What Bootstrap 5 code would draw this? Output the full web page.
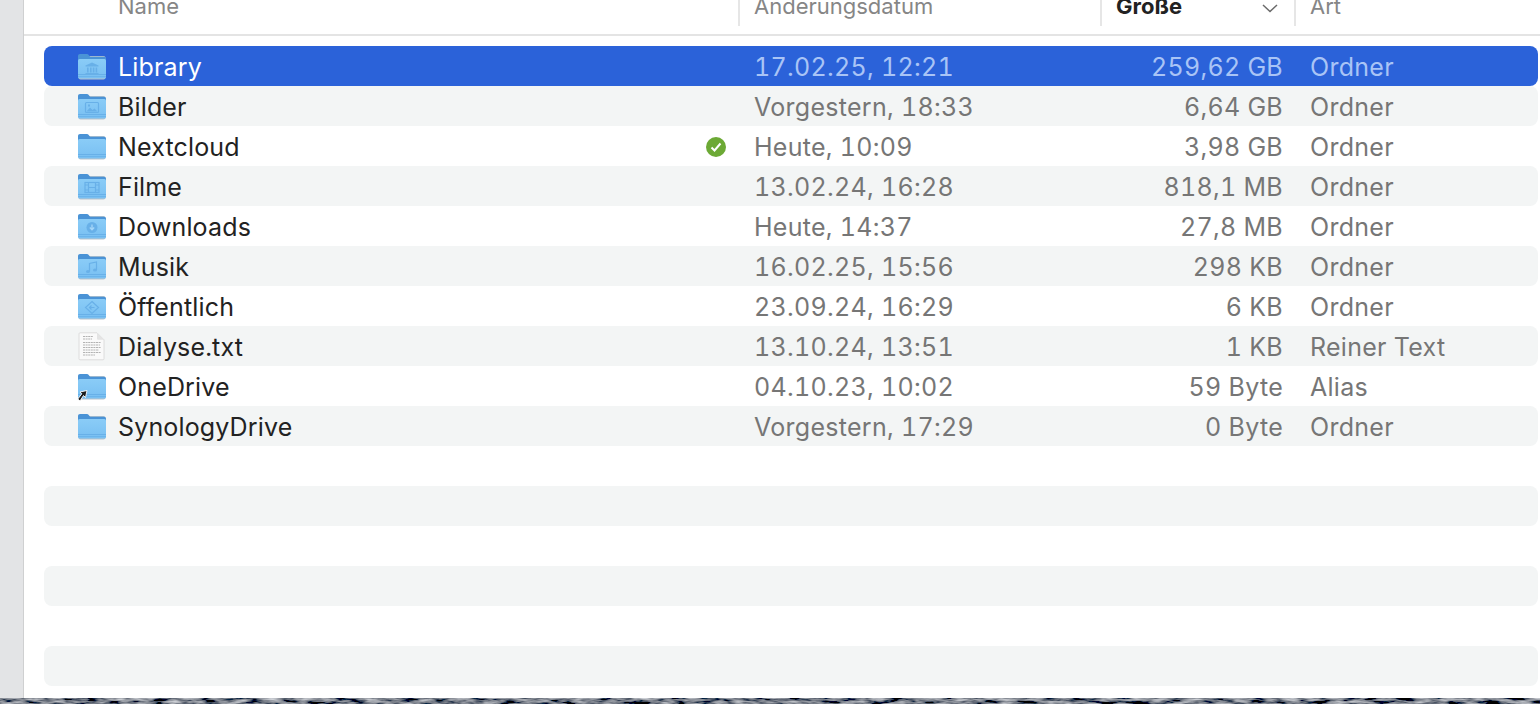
<!DOCTYPE html>
<html lang="de">
<head>
  <meta charset="UTF-8" />
  <title>Finder</title>
  <link href="https://cdn.jsdelivr.net/npm/bootstrap@5.3.3/dist/css/bootstrap.min.css" rel="stylesheet"/>
  <style>
    body { font-family: Inter, "Liberation Sans", sans-serif; background: #fff; color: #222; }
    .side-strip { width: 24px; background: #e3e4e6; border-right: 1px solid #cfd0d1; }
    .head-bar { height: 36px; border-bottom: 2px solid #e4e4e4; font-size: 22px; line-height: 20px; color: #868686; }
    .head-cell { height: 26px; overflow: visible; }
    .head-cell span { display: block; margin-top: -4px; }
    .head-sep { border-left: 2px solid #e6e6e6; }
    .head-active { color: #222; font-weight: 700; }
    .file-list { padding: 10px 2px 0 20px; }
    .file-row { height: 40px; padding-top: 1px; border-radius: 8px; font-size: 25px; line-height: 40px; letter-spacing: .28px; color: #767676; flex: none; font-variant-numeric: tabular-nums; }
    .file-row.alt { background: #f3f5f5; }
    .file-row.sel { background: #2b62d9; color: #a9c4f6; }
    .file-row.sel .col-name { color: #fff; }
    .col-name { width: 695px; padding-left: 33px; color: #222; letter-spacing: .15px; }
    .col-date { width: 362px; padding-left: 15px; }
    .col-size { width: 194px; padding-right: 12px; text-align: right; }
    .col-kind { padding-left: 15px; }
    .col-name svg.item-icon { width: 30px; height: 28px; margin: 5px 11px 0 0; flex: none; overflow: visible; }
    .head-name { width: 714px; padding-left: 94px; }
    .head-date { width: 362px; padding-left: 14px; }
    .head-size { width: 194px; padding: 0 16px 0 14px; }
    .head-kind { padding-left: 14px; flex: 1; }
    .state-icon { width: 22px; height: 22px; margin: 9px 12px 0 auto; }
    .photo-strip { height: 6px; flex: none; background: #23272f; }
    .photo-strip svg { display: block; width: 100%; height: 6px; }
    .glyph { fill: #68b0e8; }
    .glyph-line { fill: none; stroke: #68b0e8; stroke-width: 1.2; }
  </style>
</head>
<body>
  <svg width="0" height="0" class="position-absolute">
    <defs>
      <linearGradient id="front" x1="0" y1="0" x2="0" y2="1">
        <stop offset="0" stop-color="#8accf7"/>
        <stop offset="1" stop-color="#78bff2"/>
      </linearGradient>
      <filter id="grain" x="0" y="0" width="100%" height="100%">
        <feTurbulence type="fractalNoise" baseFrequency="0.06 0.3" numOctaves="3" seed="7"/>
        <feColorMatrix type="matrix" values="1.2 0 0 0 -0.42  1.2 0 0 0 -0.4  1.2 0 0 0 -0.36  0 0 0 0 1"/>
      </filter>
      <symbol id="folder" viewBox="0 0 30 28">
        <rect x="1.5" y="4" width="27" height="23.5" rx="2" fill="#b9c4cc"/>
        <path d="M1 4.200C1 2.800 1.800 2 3 2h6.500c1 0 1.600.3 2.200 1l1 1.200c.4.4.8.6 1.400.6H27c1.200 0 2 .8 2 2V12H1z" fill="#4a93d6"/>
        <rect x="1" y="7" width="28" height="19.500" rx="1.600" fill="url(#front)"/>
        <rect x="1" y="22" width="28" height="1" fill="#68b0e8"/>
        <rect x="1" y="24" width="28" height="1" fill="#6cb4ea"/>
      </symbol>
    </defs>
  </svg>

  <div class="d-flex vh-100 flex-column overflow-hidden">
    <div class="d-flex flex-grow-1 overflow-hidden">
      <div class="side-strip flex-shrink-0"></div>
      <div class="flex-grow-1 d-flex flex-column overflow-hidden">
        <div class="head-bar d-flex flex-shrink-0">
          <div class="head-cell head-name"><span>Name</span></div>
          <div class="head-cell head-sep head-date"><span>Änderungsdatum</span></div>
          <div class="head-cell head-sep head-size d-flex justify-content-between head-active">
            <span>Große</span>
            <svg width="16" height="9" viewBox="0 0 16 9" class="mt-1"><path d="M1 1l7 6.500L15 1" fill="none" stroke="#6b6b6b" stroke-width="1.500"/></svg>
          </div>
          <div class="head-cell head-sep head-kind"><span>Art</span></div>
        </div>

        <div class="file-list d-flex flex-column flex-grow-1 overflow-hidden">
          <div class="file-row sel d-flex">
            <div class="col-name d-flex">
              <svg class="item-icon"><use href="#folder"/><path class="glyph" d="M15 10.500l6.500 3v1h-13v-1zM10 15.500h1.600v5H10zM13 15.500h1.600v5H13zM15.800 15.500h1.600v5h-1.600zM18.600 15.500h1.600v5h-1.600zM8.500 21h13v1.200h-13z"/></svg>
              <span>Library</span>
            </div>
            <div class="col-date">17.02.25, 12:21</div>
            <div class="col-size">259,62 GB</div>
            <div class="col-kind">Ordner</div>
          </div>
          <div class="file-row alt d-flex">
            <div class="col-name d-flex">
              <svg class="item-icon"><use href="#folder"/><rect class="glyph-line" x="8.500" y="10.500" width="13" height="10" rx="1"/><path class="glyph" d="M9.500 19.500l3.500-4 2.500 2.500 2-1.500 3 3zM11 12.500h2v2h-2z"/></svg>
              <span>Bilder</span>
            </div>
            <div class="col-date">Vorgestern, 18:33</div>
            <div class="col-size">6,64 GB</div>
            <div class="col-kind">Ordner</div>
          </div>
          <div class="file-row d-flex">
            <div class="col-name d-flex">
              <svg class="item-icon"><use href="#folder"/></svg>
              <span>Nextcloud</span>
              <svg class="state-icon" viewBox="0 0 22 22"><circle cx="11" cy="11" r="10" fill="#6ca935"/><path d="M6.500 11.500l3 3 6-7" fill="none" stroke="#fff" stroke-width="2"/></svg>
            </div>
            <div class="col-date">Heute, 10:09</div>
            <div class="col-size">3,98 GB</div>
            <div class="col-kind">Ordner</div>
          </div>
          <div class="file-row alt d-flex">
            <div class="col-name d-flex">
              <svg class="item-icon"><use href="#folder"/><rect class="glyph-line" x="8" y="10.500" width="14" height="10"/><path class="glyph-line" d="M11.500 10.500v10M18.500 10.500v10M11.500 15.500h7M8 13h3.500M8 18h3.500M18.500 13H22M18.500 18H22"/></svg>
              <span>Filme</span>
            </div>
            <div class="col-date">13.02.24, 16:28</div>
            <div class="col-size">818,1 MB</div>
            <div class="col-kind">Ordner</div>
          </div>
          <div class="file-row d-flex">
            <div class="col-name d-flex">
              <svg class="item-icon"><use href="#folder"/><circle class="glyph" cx="15" cy="15.500" r="5.500"/><path d="M15 12.500v5M12.800 15.500l2.200 2.300 2.200-2.300" fill="none" stroke="#a5d6f8" stroke-width="1.300"/></svg>
              <span>Downloads</span>
            </div>
            <div class="col-date">Heute, 14:37</div>
            <div class="col-size">27,8 MB</div>
            <div class="col-kind">Ordner</div>
          </div>
          <div class="file-row alt d-flex">
            <div class="col-name d-flex">
              <svg class="item-icon"><use href="#folder"/><path class="glyph-line" d="M12.500 19.500v-8l7-1.500v8"/><ellipse class="glyph" cx="11" cy="19.500" rx="2" ry="1.500"/><ellipse class="glyph" cx="18" cy="18" rx="2" ry="1.500"/></svg>
              <span>Musik</span>
            </div>
            <div class="col-date">16.02.25, 15:56</div>
            <div class="col-size">298 KB</div>
            <div class="col-kind">Ordner</div>
          </div>
          <div class="file-row d-flex">
            <div class="col-name d-flex">
              <svg class="item-icon"><use href="#folder"/><path class="glyph-line" d="M15 9.500l6.500 6-6.500 6-6.500-6z"/><path class="glyph-line" d="M17.500 15.500h-5M14.500 13.500l-2 2 2 2"/></svg>
              <span>Öffentlich</span>
            </div>
            <div class="col-date">23.09.24, 16:29</div>
            <div class="col-size">6 KB</div>
            <div class="col-kind">Ordner</div>
          </div>
          <div class="file-row alt d-flex">
            <div class="col-name d-flex">
              <svg class="item-icon" viewBox="0 0 30 28">
                <path d="M3 .8h17l7 7v19a1 1 0 0 1-1 1H3a1 1 0 0 1-1-1V1.800a1 1 0 0 1 1-1z" fill="#fafafa" stroke="#d6d6d6" stroke-width=".8"/>
                <path d="M20 .8v6a1 1 0 0 0 1 1h6z" fill="#e4e4e4"/>
                <path d="M6 4.500h10M6 7h9M6 10.500h18M6 13h17M6 15.500h18M6 18h16M6 20.500h18M6 23h12" stroke="#b3b3b3" stroke-width="1.100" stroke-dasharray="2 .6"/>
              </svg>
              <span>Dialyse.txt</span>
            </div>
            <div class="col-date">13.10.24, 13:51</div>
            <div class="col-size">1 KB</div>
            <div class="col-kind">Reiner Text</div>
          </div>
          <div class="file-row d-flex">
            <div class="col-name d-flex">
              <svg class="item-icon"><use href="#folder"/><path d="M10 18.500L8.500 25.500 6.500 23.500 3 29 .8 27 4.800 21.800 3 20z" fill="#1c1c1c" stroke="#fff" stroke-width=".9" stroke-linejoin="round"/></svg>
              <span>OneDrive</span>
            </div>
            <div class="col-date">04.10.23, 10:02</div>
            <div class="col-size">59 Byte</div>
            <div class="col-kind">Alias</div>
          </div>
          <div class="file-row alt d-flex">
            <div class="col-name d-flex">
              <svg class="item-icon"><use href="#folder"/></svg>
              <span>SynologyDrive</span>
            </div>
            <div class="col-date">Vorgestern, 17:29</div>
            <div class="col-size">0 Byte</div>
            <div class="col-kind">Ordner</div>
          </div>
          <div class="file-row"></div>
          <div class="file-row alt"></div>
          <div class="file-row"></div>
          <div class="file-row alt"></div>
          <div class="file-row"></div>
          <div class="file-row alt"></div>
        </div>
      </div>
    </div>
    <div class="photo-strip">
      <svg preserveAspectRatio="none"><rect width="100%" height="6" filter="url(#grain)"/></svg>
    </div>
  </div>
  <script src="https://cdn.jsdelivr.net/npm/bootstrap@5.3.3/dist/js/bootstrap.bundle.min.js"></script>
</body>
</html>
